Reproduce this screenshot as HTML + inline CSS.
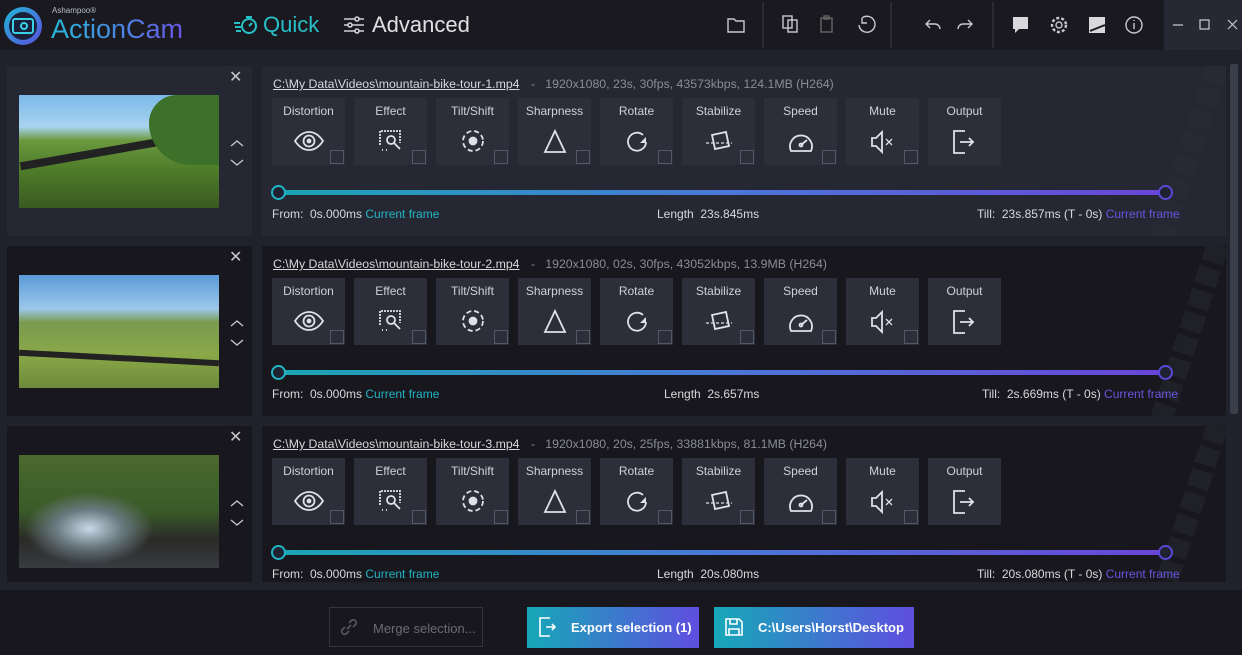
<!DOCTYPE html><html><head><meta charset="utf-8"><style>
*{box-sizing:border-box;margin:0;padding:0}
body{width:1242px;height:655px;overflow:hidden;background:#20222b;font-family:"Liberation Sans",sans-serif;color:#d8d8dc;position:relative}
.top{position:absolute;left:0;top:0;width:1242px;height:50px;background:#19191f}
.win{position:absolute;left:1164px;top:0;width:78px;height:50px;background:#262833}
.abs{position:absolute}
.lp{position:absolute;left:7px;width:245px;height:170px}
.rp{position:absolute;left:262px;width:964px;height:170px;overflow:hidden}
.sel{background:#252833}.dk{background:#17171d}
.path{position:absolute;left:11px;top:11px;font-size:12.3px;color:#d8d8dc;white-space:nowrap}
.path u{text-decoration:underline}
.path span{color:#8a8c96;display:inline-block;margin-left:8px}
.tile{position:absolute;top:32px;width:73px;height:67px;background:#2c2f3a}
.tile .t{position:absolute;top:6px;width:100%;text-align:center;font-size:12px;color:#d0d0d6}
.tile svg{position:absolute;left:22px;top:31px}
.tile .cb{position:absolute;left:58px;top:52px;width:14px;height:14px;border:1px solid #555866}
.bar{position:absolute;left:16px;top:124px;width:888px;height:5px;background:linear-gradient(90deg,#1aa5b3,#4a78d8,#6a45d8)}
.k{position:absolute;top:119px;width:15px;height:15px;border-radius:50%;border:2px solid;background:#1f2230}
.lab{position:absolute;top:141px;font-size:12px;color:#d8d8dc;white-space:nowrap}
.cy{color:#22b5c5}.pu{color:#6a55e0}
.x{position:absolute;left:222px;font-size:16px;color:#c8c8cc}
.ch{position:absolute;left:222px;top:72px}
.thumb{position:absolute;left:12px;width:200px;height:113px}
.btn{position:absolute;top:607px;height:41px;font-size:13px;font-weight:bold;color:#fff;display:flex;align-items:center}
.stripe{position:absolute;right:30px;top:-30px;width:22px;height:260px;background:repeating-linear-gradient(180deg,#2a2c36 0 18px,transparent 18px 24px);transform:rotate(18deg);opacity:.45}
svg.i{fill:none;stroke:#e0e0e6;stroke-width:1.8}
</style></head><body>
<div class="top"></div><div class="win"></div>
<svg class="abs" style="left:2px;top:5px" width="42" height="42"><defs><linearGradient id="lg" x1="0" y1="0" x2="1" y2="1"><stop offset="0" stop-color="#21b8d8"/><stop offset="1" stop-color="#5a4ee0"/></linearGradient></defs><circle cx="21" cy="21" r="19" fill="url(#lg)"/><circle cx="21" cy="21" r="14" fill="#1a1f3a"/><rect x="11" y="14" width="20" height="14" rx="2" fill="none" stroke="#3ad0e8" stroke-width="2"/><circle cx="22" cy="21" r="3" fill="none" stroke="#3ad0e8" stroke-width="2"/></svg>
<div class="abs" style="left:52px;top:6px;font-size:8px;color:#b8bccc">Ashampoo®</div>
<div class="abs" style="left:51px;top:14px;font-size:27px;background:linear-gradient(90deg,#27b8d8,#6a56e6);-webkit-background-clip:text;color:transparent">ActionCam</div>
<svg class="abs" style="left:233px;top:14px" width="26" height="22" fill="none" stroke="#27c0c8" stroke-width="2"><path d="M1 9h6M2 13h6M3 17h5"/><circle cx="16" cy="12" r="7"/><path d="M16 12l3-3M13 3h6"/></svg>
<div class="abs" style="left:263px;top:12px;font-size:22px;color:#27c0c8">Quick</div>
<svg class="abs" style="left:343px;top:15px" width="22" height="20" stroke="#d0d0d6" stroke-width="1.6" fill="#19191f"><path d="M1 4h20M1 10h20M1 16h20"/><circle cx="14" cy="4" r="2"/><circle cx="7" cy="10" r="2"/><circle cx="14" cy="16" r="2"/></svg>
<div class="abs" style="left:372px;top:12px;font-size:22px;color:#e0e0e4">Advanced</div>
<svg class="abs" style="left:700px;top:0" width="464" height="50" fill="none" stroke="#c8c8d0" stroke-width="1.4">
<path d="M28 19h6l2 2h8v11H28z"/>
<line x1="63" y1="2" x2="63" y2="48" stroke="#33343c"/>
<rect x="83" y="16" width="9" height="12"/><rect x="88" y="20" width="9" height="12"/>
<rect x="121" y="18" width="11" height="14" stroke="#666"/><rect x="124" y="16" width="5" height="3" stroke="#666"/>
<path d="M162 18a8 8 0 1 1-3 7M162 18v5h5"/>
<line x1="191" y1="2" x2="191" y2="48" stroke="#33343c"/>
<path d="M230 20l-4 4 4 4M226 24h9a5 5 0 0 1 5 5"/>
<path d="M268 20l4 4-4 4M272 24h-9a5 5 0 0 0-5 5"/>
<line x1="293" y1="2" x2="293" y2="48" stroke="#33343c"/>
<path d="M313 17h15v12h-9l-4 4v-4h-2z" fill="#d8d8dc" stroke="none"/>
<circle cx="359" cy="25" r="3"/><circle cx="359" cy="25" r="7" stroke-dasharray="3 2" stroke-width="2.4"/>
<rect x="389" y="17" width="16" height="16" fill="#d8d8dc" stroke="none"/><path d="M390 31l15-6" stroke="#19191f" stroke-width="2"/>
<circle cx="434" cy="25" r="8"/><path d="M434 23v6M434 20v1"/>
</svg>
<svg class="abs" style="left:1164px;top:0" width="78" height="50" fill="none" stroke="#c8c8d0" stroke-width="1.2"><path d="M9 25h10M36 20h9v9h-9zM64 20l9 9M73 20l-9 9"/></svg>
<div class="abs" style="left:1230px;top:64px;width:8px;height:350px;background:#3a3d4a;border-radius:2px"></div>

<!-- ROW 1 -->
<div class="lp sel" style="top:66px"><div class="x" style="top:1px">✕</div>
<div class="thumb" style="top:29px;background:linear-gradient(180deg,#7cb8e8 0%,#a8d4f0 28%,#6c9a40 40%,#4f7d2a 65%,#3a5a20 100%)"><div style="position:absolute;left:0;top:50px;width:200px;height:8px;background:#222;transform:rotate(-10deg)"></div><div style="position:absolute;right:0;top:0;width:70px;height:70px;background:#3d7028;border-radius:40% 0 0 60%"></div></div>
<svg class="ch" width="16" height="30" fill="none" stroke="#c8c8cc" stroke-width="1.3"><path d="M2 8l6-5 6 5M2 22l6 5 6-5"/></svg></div>
<div class="rp sel" style="top:66px"><div class="stripe"></div>
<div class="path"><u>C:\My Data\Videos\mountain-bike-tour-1.mp4</u> <span>-&nbsp;&nbsp; 1920x1080, 23s, 30fps, 43573kbps, 124.1MB (H264)</span></div>
<div class="tile" style="left:10px"><div class="t">Distortion</div><svg class="i" width="30" height="26"><path d="M1 12c8-12 20-12 28 0c-8 12-20 12-28 0z"/><circle cx="15" cy="12" r="5.5"/><circle cx="15" cy="12" r="1.5" fill="#e0e0e6"/></svg><div class="cb"></div></div>
<div class="tile" style="left:92px"><div class="t">Effect</div><svg class="i" width="30" height="26"><path d="M4 16V2h20v12" stroke-dasharray="2 1"/><circle cx="15" cy="11" r="4"/><path d="M18 14l6 6M6 21h1M10 21h1"/></svg><div class="cb"></div></div>
<div class="tile" style="left:174px"><div class="t">Tilt/Shift</div><svg class="i" width="30" height="26"><circle cx="15" cy="12" r="10" stroke-dasharray="5 3"/><circle cx="15" cy="12" r="3.5" fill="#e0e0e6"/></svg><div class="cb"></div></div>
<div class="tile" style="left:256px"><div class="t">Sharpness</div><svg class="i" width="30" height="26"><path d="M15 2L25 23H5z"/></svg><div class="cb"></div></div>
<div class="tile" style="left:338px"><div class="t">Rotate</div><svg class="i" width="30" height="26"><path d="M24 13a9 9 0 1 1-3-7"/><path d="M25 6v6h-6" fill="#e0e0e6" stroke="none" transform="translate(-1,2)"/></svg><div class="cb"></div></div>
<div class="tile" style="left:420px"><div class="t">Stabilize</div><svg class="i" width="30" height="26"><path d="M8 6l14-3 3 14-14 3z"/><path d="M2 14h26" stroke-dasharray="3 2" stroke-width="1.2"/></svg><div class="cb"></div></div>
<div class="tile" style="left:502px"><div class="t">Speed</div><svg class="i" width="30" height="26"><path d="M5 22a11 11 0 1 1 20 0z"/><path d="M15 16l6-5"/><circle cx="15" cy="16" r="1.5"/></svg><div class="cb"></div></div>
<div class="tile" style="left:584px"><div class="t">Mute</div><svg class="i" width="30" height="26"><path d="M4 9h4l6-6v20l-6-6H4z"/><path d="M18 10l6 6M24 10l-6 6" stroke-width="1.3"/></svg><div class="cb"></div></div>
<div class="tile" style="left:666px"><div class="t">Output</div><svg class="i" width="30" height="26"><path d="M15 2H4v22h11M10 13h13M19 9l4 4-4 4"/></svg></div>
<div class="bar"></div><div class="k" style="left:9px;border-color:#22b5c5"></div><div class="k" style="left:896px;border-color:#5a48d8"></div>
<div class="lab" style="left:10px">From:&nbsp; 0s.000ms <span class="cy">Current frame</span></div>
<div class="lab" style="left:395px">Length&nbsp; 23s.845ms</div>
<div class="lab" style="left:715px">Till:&nbsp; 23s.857ms (T - 0s) <span class="pu">Current frame</span></div></div>

<!-- ROW 2 -->
<div class="lp dk" style="top:246px"><div class="x" style="top:1px">✕</div>
<div class="thumb" style="top:29px;background:linear-gradient(180deg,#5a9ad8 0%,#9cc8ea 30%,#7a9a50 42%,#8aa848 70%,#6f8a3a 100%)"><div style="position:absolute;left:0;top:80px;width:200px;height:6px;background:#222;transform:rotate(3deg)"></div></div>
<svg class="ch" width="16" height="30" fill="none" stroke="#c8c8cc" stroke-width="1.3"><path d="M2 8l6-5 6 5M2 22l6 5 6-5"/></svg></div>
<div class="rp dk" style="top:246px"><div class="stripe"></div>
<div class="path"><u>C:\My Data\Videos\mountain-bike-tour-2.mp4</u> <span>-&nbsp;&nbsp; 1920x1080, 02s, 30fps, 43052kbps, 13.9MB (H264)</span></div>
<div class="tile" style="left:10px"><div class="t">Distortion</div><svg class="i" width="30" height="26"><path d="M1 12c8-12 20-12 28 0c-8 12-20 12-28 0z"/><circle cx="15" cy="12" r="5.5"/><circle cx="15" cy="12" r="1.5" fill="#e0e0e6"/></svg><div class="cb"></div></div>
<div class="tile" style="left:92px"><div class="t">Effect</div><svg class="i" width="30" height="26"><path d="M4 16V2h20v12" stroke-dasharray="2 1"/><circle cx="15" cy="11" r="4"/><path d="M18 14l6 6M6 21h1M10 21h1"/></svg><div class="cb"></div></div>
<div class="tile" style="left:174px"><div class="t">Tilt/Shift</div><svg class="i" width="30" height="26"><circle cx="15" cy="12" r="10" stroke-dasharray="5 3"/><circle cx="15" cy="12" r="3.5" fill="#e0e0e6"/></svg><div class="cb"></div></div>
<div class="tile" style="left:256px"><div class="t">Sharpness</div><svg class="i" width="30" height="26"><path d="M15 2L25 23H5z"/></svg><div class="cb"></div></div>
<div class="tile" style="left:338px"><div class="t">Rotate</div><svg class="i" width="30" height="26"><path d="M24 13a9 9 0 1 1-3-7"/><path d="M25 6v6h-6" fill="#e0e0e6" stroke="none" transform="translate(-1,2)"/></svg><div class="cb"></div></div>
<div class="tile" style="left:420px"><div class="t">Stabilize</div><svg class="i" width="30" height="26"><path d="M8 6l14-3 3 14-14 3z"/><path d="M2 14h26" stroke-dasharray="3 2" stroke-width="1.2"/></svg><div class="cb"></div></div>
<div class="tile" style="left:502px"><div class="t">Speed</div><svg class="i" width="30" height="26"><path d="M5 22a11 11 0 1 1 20 0z"/><path d="M15 16l6-5"/><circle cx="15" cy="16" r="1.5"/></svg><div class="cb"></div></div>
<div class="tile" style="left:584px"><div class="t">Mute</div><svg class="i" width="30" height="26"><path d="M4 9h4l6-6v20l-6-6H4z"/><path d="M18 10l6 6M24 10l-6 6" stroke-width="1.3"/></svg><div class="cb"></div></div>
<div class="tile" style="left:666px"><div class="t">Output</div><svg class="i" width="30" height="26"><path d="M15 2H4v22h11M10 13h13M19 9l4 4-4 4"/></svg></div>
<div class="bar"></div><div class="k" style="left:9px;border-color:#22b5c5"></div><div class="k" style="left:896px;border-color:#5a48d8"></div>
<div class="lab" style="left:10px">From:&nbsp; 0s.000ms <span class="cy">Current frame</span></div>
<div class="lab" style="left:402px">Length&nbsp; 2s.657ms</div>
<div class="lab" style="left:720px">Till:&nbsp; 2s.669ms (T - 0s) <span class="pu">Current frame</span></div></div>

<!-- ROW 3 -->
<div class="lp dk" style="top:426px;height:156px"><div class="x" style="top:1px">✕</div>
<div class="thumb" style="top:29px;background:radial-gradient(ellipse at 35% 65%,#c8d8e8 0%,#6a7a80 18%,transparent 35%),linear-gradient(180deg,#4a6a30 0%,#3a5a28 50%,#2a2a28 75%,#383c40 100%)"></div>
<svg class="ch" width="16" height="30" fill="none" stroke="#c8c8cc" stroke-width="1.3"><path d="M2 8l6-5 6 5M2 22l6 5 6-5"/></svg></div>
<div class="rp dk" style="top:426px;height:156px"><div class="stripe"></div>
<div class="path"><u>C:\My Data\Videos\mountain-bike-tour-3.mp4</u> <span>-&nbsp;&nbsp; 1920x1080, 20s, 25fps, 33881kbps, 81.1MB (H264)</span></div>
<div class="tile" style="left:10px"><div class="t">Distortion</div><svg class="i" width="30" height="26"><path d="M1 12c8-12 20-12 28 0c-8 12-20 12-28 0z"/><circle cx="15" cy="12" r="5.5"/><circle cx="15" cy="12" r="1.5" fill="#e0e0e6"/></svg><div class="cb"></div></div>
<div class="tile" style="left:92px"><div class="t">Effect</div><svg class="i" width="30" height="26"><path d="M4 16V2h20v12" stroke-dasharray="2 1"/><circle cx="15" cy="11" r="4"/><path d="M18 14l6 6M6 21h1M10 21h1"/></svg><div class="cb"></div></div>
<div class="tile" style="left:174px"><div class="t">Tilt/Shift</div><svg class="i" width="30" height="26"><circle cx="15" cy="12" r="10" stroke-dasharray="5 3"/><circle cx="15" cy="12" r="3.5" fill="#e0e0e6"/></svg><div class="cb"></div></div>
<div class="tile" style="left:256px"><div class="t">Sharpness</div><svg class="i" width="30" height="26"><path d="M15 2L25 23H5z"/></svg><div class="cb"></div></div>
<div class="tile" style="left:338px"><div class="t">Rotate</div><svg class="i" width="30" height="26"><path d="M24 13a9 9 0 1 1-3-7"/><path d="M25 6v6h-6" fill="#e0e0e6" stroke="none" transform="translate(-1,2)"/></svg><div class="cb"></div></div>
<div class="tile" style="left:420px"><div class="t">Stabilize</div><svg class="i" width="30" height="26"><path d="M8 6l14-3 3 14-14 3z"/><path d="M2 14h26" stroke-dasharray="3 2" stroke-width="1.2"/></svg><div class="cb"></div></div>
<div class="tile" style="left:502px"><div class="t">Speed</div><svg class="i" width="30" height="26"><path d="M5 22a11 11 0 1 1 20 0z"/><path d="M15 16l6-5"/><circle cx="15" cy="16" r="1.5"/></svg><div class="cb"></div></div>
<div class="tile" style="left:584px"><div class="t">Mute</div><svg class="i" width="30" height="26"><path d="M4 9h4l6-6v20l-6-6H4z"/><path d="M18 10l6 6M24 10l-6 6" stroke-width="1.3"/></svg><div class="cb"></div></div>
<div class="tile" style="left:666px"><div class="t">Output</div><svg class="i" width="30" height="26"><path d="M15 2H4v22h11M10 13h13M19 9l4 4-4 4"/></svg></div>
<div class="bar"></div><div class="k" style="left:9px;border-color:#22b5c5"></div><div class="k" style="left:896px;border-color:#5a48d8"></div>
<div class="lab" style="left:10px">From:&nbsp; 0s.000ms <span class="cy">Current frame</span></div>
<div class="lab" style="left:395px">Length&nbsp; 20s.080ms</div>
<div class="lab" style="left:715px">Till:&nbsp; 20s.080ms (T - 0s) <span class="pu">Current frame</span></div></div>

<div class="abs" style="left:0;top:590px;width:1242px;height:65px;background:#17171d"></div>
<div class="abs" style="left:329px;top:607px;width:154px;height:40px;border:1px solid #33343c;font-size:13px;color:#6a6c74;padding:13px 0 0 43px">Merge selection...</div>
<svg class="abs" style="left:338px;top:616px" width="22" height="22" fill="none" stroke="#55575f" stroke-width="1.6"><path d="M9 13l4-4M7 11l-3 3a3 3 0 0 0 4 4l3-3M15 11l3-3a3 3 0 0 0-4-4l-3 3"/></svg>
<div class="btn" style="left:527px;width:172px;background:linear-gradient(90deg,#16a8b8,#5f4ee0);padding-left:44px">Export selection (1)</div>
<svg class="abs" style="left:537px;top:616px" width="22" height="22" fill="none" stroke="#fff" stroke-width="1.6"><path d="M13 2H3v18h10M9 11h9M15 8l3 3-3 3"/></svg>
<div class="btn" style="left:714px;width:200px;background:linear-gradient(90deg,#16a8b8,#5f4ee0);padding-left:44px">C:\Users\Horst\Desktop</div>
<svg class="abs" style="left:724px;top:617px" width="20" height="20" fill="none" stroke="#fff" stroke-width="1.6"><path d="M2 2h13l3 3v13H2z"/><path d="M6 2v5h7V2M5 18v-6h10v6"/></svg>
</body></html>
